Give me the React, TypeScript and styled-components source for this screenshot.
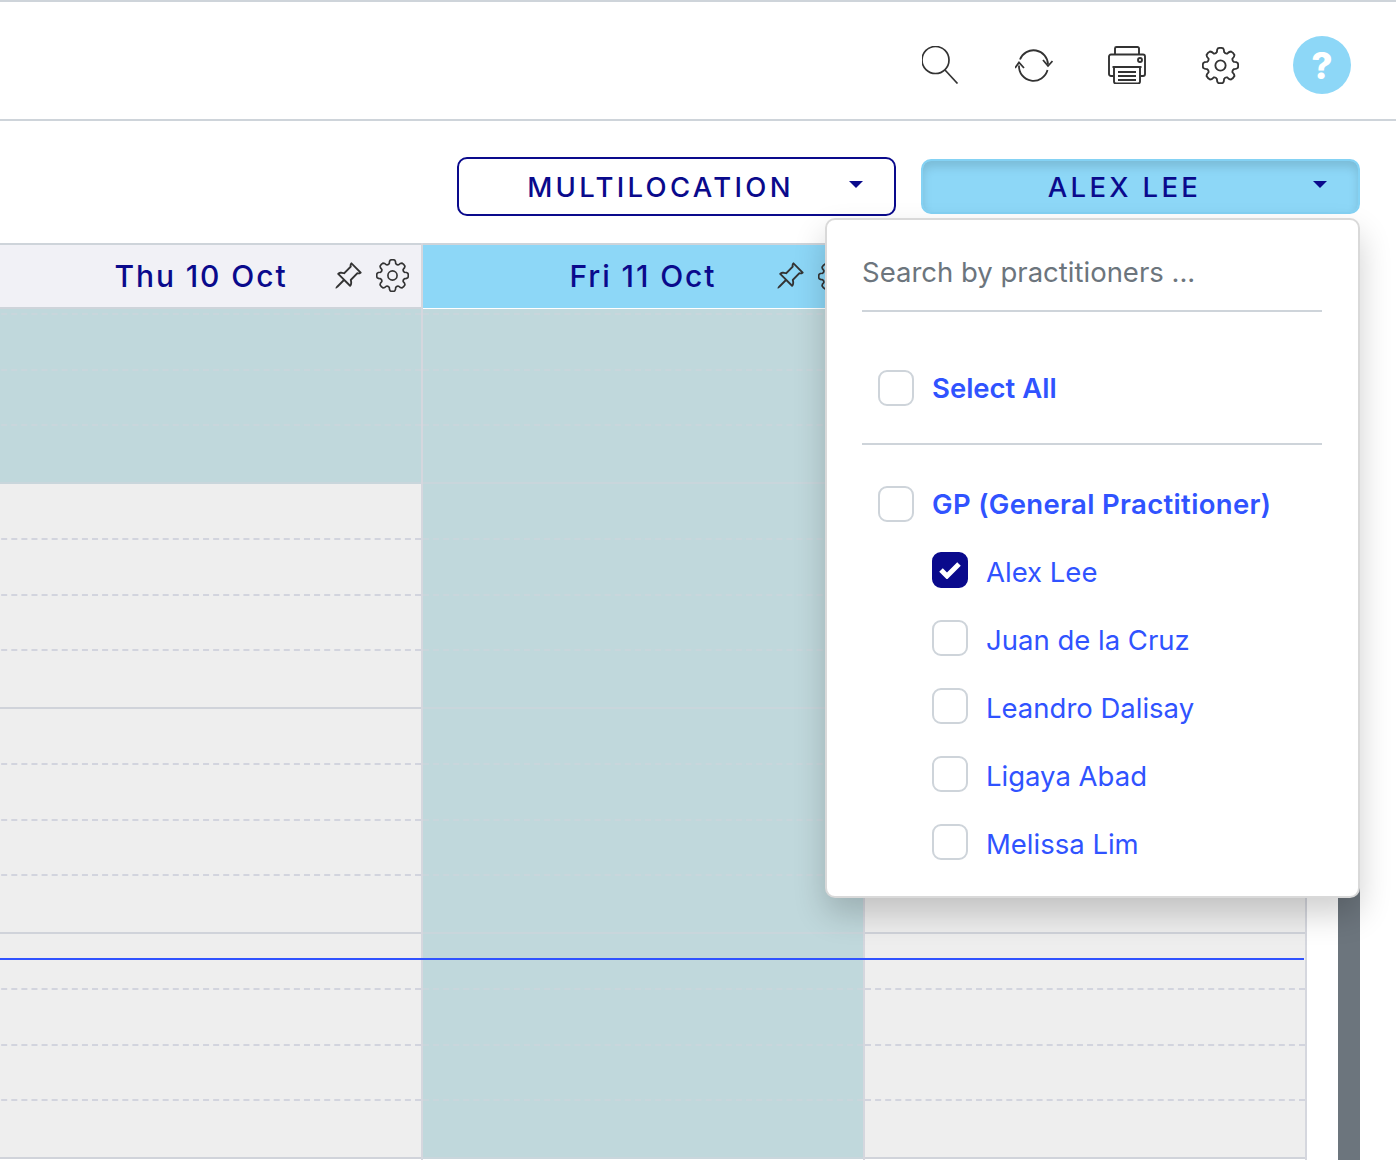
import styled, { createGlobalStyle } from "styled-components";
import { BsPinAngle } from "react-icons/bs";

const GlobalStyle = createGlobalStyle`
  html, body {
    margin: 0;
    height: 100%;
    background: #fff;
    overflow: hidden;
  }
  * {
    box-sizing: border-box;
  }
  body {
    font-family: "Inter", "Liberation Sans", sans-serif;
  }
`;

const Page = styled.div`
  position: relative;
  width: 1396px;
  height: 1160px;
  overflow: hidden;
  border-top: 2px solid #ced4da;
`;

const TopBar = styled.header`
  height: 119px;
  display: flex;
  align-items: center;
  justify-content: flex-end;
  padding: 9px 45px 0 0;
  gap: 55px;
  border-bottom: 2px solid #ced4da;
  color: #333;
`;

const ToolIcon = styled.span`
  display: flex;
  width: 38px;
  height: 38px;
  align-items: center;
  justify-content: center;
`;

const HelpButton = styled.span`
  width: 58px;
  height: 58px;
  margin-left: -1px;
  border-radius: 50%;
  background: #8dd7f7;
  color: #fff;
  font-size: 37px;
  font-weight: 800;
  display: flex;
  align-items: center;
  justify-content: center;
`;

const Filters = styled.div`
  height: 122px;
  display: flex;
  justify-content: flex-end;
  align-items: center;
  gap: 25px;
  padding: 9px 36px 0 0;
`;

const FilterButton = styled.div<{ $active?: boolean }>`
  position: relative;
  width: 439px;
  height: ${(p) => (p.$active ? "55px" : "59px")};
  border-radius: 10px;
  border: 2px solid ${(p) => (p.$active ? "#84d2f4" : "#0a0a8c")};
  background: ${(p) => (p.$active ? "#8dd7f7" : "#fff")};
  box-shadow: ${(p) => (p.$active ? "inset 0 6px 10px rgba(0, 0, 0, 0.125)" : "none")};
  color: #0a0a8c;
  font-size: 27.5px;
  letter-spacing: 3.3px;
  font-weight: 500;
  display: flex;
  align-items: center;
  justify-content: center;
  padding-right: 32px;
`;

const Caret = styled.span`
  position: absolute;
  right: 31px;
  top: 50%;
  margin-top: -6px;
  width: 0;
  height: 0;
  border-left: 7px solid transparent;
  border-right: 7px solid transparent;
  border-top: 7px solid #0a0a8c;
`;

const Calendar = styled.div`
  display: flex;
  width: 1360px;
  height: 917px;
`;

const Days = styled.div`
  flex: none;
  width: 1326px;
  margin-left: -19px;
  display: grid;
  grid-template-columns: repeat(3, 442px);
`;

const Day = styled.section`
  display: flex;
  flex-direction: column;
  min-width: 0;
  border-right: 2px solid #d5d7de;
`;

const DayHead = styled.div<{ $today?: boolean }>`
  height: 66px;
  flex: none;
  display: grid;
  grid-template-columns: 1fr auto 1fr;
  align-items: center;
  padding-bottom: 1px;
  border-top: 2px solid #ced4da;
  border-bottom: ${(p) => (p.$today ? "1px solid #fff" : "2px solid #ced4da")};
  background: ${(p) => (p.$today ? "#8dd7f7" : "#f1f1f6")};
  color: #333;
`;

const DayTitle = styled.h2`
  grid-column: 2;
  margin: 0;
  font-size: 30px;
  font-weight: 500;
  letter-spacing: 1.9px;
  color: #0a0a8c;
  white-space: nowrap;
`;

const DayTools = styled.div`
  grid-column: 3;
  display: flex;
  align-items: center;
  justify-content: flex-end;
  gap: 13px;
  padding-right: 12px;
`;

const Slots = styled.div`
  flex: 1;
  overflow: hidden;
  min-height: 0;
`;

const HourStack = styled.div`
  margin-top: -50px;
`;

const Hour = styled.div<{ $closed?: boolean }>`
  height: 225px;
  display: grid;
  grid-template-rows: repeat(4, 1fr);
  background: ${(p) => (p.$closed ? "#c0d8dc" : "#eeeeee")};
  border-bottom: 2px solid ${(p) => (p.$closed ? "#c9d6dc" : "#d0d3da")};
`;

const Slot = styled.div<{ $closed?: boolean }>`
  border-bottom: 2px dashed ${(p) => (p.$closed ? "#c9d6dc" : "#d2d4de")};
  &:last-child {
    border-bottom: none;
  }
`;

const Scrollbar = styled.div`
  flex: none;
  margin: 67px 0 0 31px;
  width: 22px;
  background: #6c757d;
`;

const NowLine = styled.div`
  position: absolute;
  top: 956px;
  left: 0;
  width: 1304px;
  height: 2px;
  background: #3053ff;
`;

const Dropdown = styled.div`
  position: absolute;
  top: 216px;
  left: 825px;
  width: 535px;
  height: 680px;
  padding: 0 36px 0 35px;
  background: #fff;
  border: 2px solid rgba(0, 0, 0, 0.15);
  border-radius: 10px;
  box-shadow: 0 16px 32px rgba(0, 0, 0, 0.19);
`;

const SearchField = styled.div`
  height: 92px;
  padding: 13px 0 0;
  display: flex;
  align-items: center;
  border-bottom: 2px solid #ced4da;
  color: #6c757d;
  font-size: 27.5px;
`;

const AllRow = styled.div`
  height: 133px;
  display: flex;
  align-items: center;
  padding: 20px 0 0 16px;
  gap: 18px;
  border-bottom: 2px solid #ced4da;
`;

const GroupRow = styled.div`
  height: 121px;
  padding: 0 0 3px 16px;
  display: flex;
  align-items: center;
  gap: 18px;
`;

const People = styled.ul`
  list-style: none;
  margin: -30px 0 0;
  padding: 0 0 0 70px;
  display: flex;
  flex-direction: column;
`;

const Person = styled.li`
  height: 68px;
  display: flex;
  align-items: center;
  gap: 18px;
`;

const Box = styled.span<{ $checked?: boolean }>`
  width: 36px;
  height: 36px;
  flex: none;
  border-radius: 9px;
  border: 2px solid ${(p) => (p.$checked ? "#0a0a8c" : "#ced4da")};
  background: ${(p) => (p.$checked ? "#0a0a8c" : "#fff")};
  display: flex;
  align-items: center;
  justify-content: center;
`;

const Label = styled.span<{ $bold?: boolean }>`
  color: #3053ff;
  font-size: 27.5px;
  font-weight: ${(p) => (p.$bold ? 600 : 400)};
  white-space: nowrap;
`;

const GroupLabel = styled(Label)`
  letter-spacing: 0.33px;
`;

const PersonLabel = styled(Label)`
  margin-top: 4px;
`;

const SearchIcon = () => (
  <svg width="38" height="38" viewBox="1 0 38 38" fill="none" stroke="#333" strokeWidth="1.7">
    <circle cx="14.500" cy="14" r="13.500" />
    <path d="M24 24 36.500 37.500" />
  </svg>
);

const RefreshIcon = () => (
  <svg width="38" height="38" viewBox="0 0 38 38" fill="none" stroke="#333" strokeWidth="1.8">
    <path d="M5 13.500A14.500 14.500 0 0 1 33 18.500" />
    <path d="M32.500 24A14.500 14.500 0 0 1 4 19.500" />
    <path d="M28 14 33 20 37.500 15" />
    <path d="M0 22 4 16.500 9 22" />
  </svg>
);

const PrinterIcon = () => (
  <svg width="38" height="38" viewBox="0 0 38 38" fill="none" stroke="#333" strokeWidth="1.9">
    <path d="M7 8V2.500A1.500 1.500 0 0 1 8.500 1h21A1.500 1.500 0 0 1 31 2.500V8" />
    <path d="M5.500 30H3a2 2 0 0 1-2-2V10.500a2 2 0 0 1 2-2h32a2 2 0 0 1 2 2V28a2 2 0 0 1-2 2h-2.500" />
    <path d="M4.500 21h29M6 21v14.500a2 2 0 0 0 2 2h22a2 2 0 0 0 2-2V21" />
    <path d="M10 26h18M10 30h18M10 34h18" />
    <circle cx="32" cy="14" r="2" />
  </svg>
);

// cog outline: 8 rounded teeth around a small hole
function gearPath(c: number, outer: number, root: number) {
  const at = (r: number, deg: number) => {
    const a = ((deg - 90) * Math.PI) / 180;
    return `${(c + r * Math.cos(a)).toFixed(2)} ${(c + r * Math.sin(a)).toFixed(2)}`;
  };
  let d = `M${at(root, -15)}`;
  for (let i = 0; i < 8; i++) {
    const t = i * 45;
    d += ` Q${at(outer - 1, t - 13)} ${at(outer, t - 8)}`;
    d += ` Q${at(outer + 0.6, t)} ${at(outer, t + 8)}`;
    d += ` Q${at(outer - 1, t + 13)} ${at(root, t + 15)}`;
    d += ` Q${at(root - 1.4, t + 22.5)} ${at(root, t + 30)}`;
  }
  return d + "Z";
}

const GearIcon = ({ size }: { size: number }) => (
  <svg width={size} height={size} viewBox="0 0 36 36" fill="none" stroke="#333" strokeWidth="1.8">
    <path d={gearPath(18, 17, 13.500)} />
    <circle cx="18" cy="18" r="5" />
  </svg>
);

const CheckIcon = () => (
  <svg width="22" height="18" viewBox="0 0 22 18" fill="none" stroke="#fff" strokeWidth="5">
    <path d="M2 9l6 6L20 3" />
  </svg>
);

const days = [
  { title: "Thu 10 Oct", today: false },
  { title: "Fri 11 Oct", today: true },
  { title: "", today: false },
];

const people = ["Alex Lee", "Juan de la Cruz", "Leandro Dalisay", "Ligaya Abad", "Melissa Lim"];

function isClosed(dayIndex: number, hourIndex: number) {
  if (dayIndex === 1) return true;
  return hourIndex === 0;
}

export default function App() {
  return (
    <>
      <GlobalStyle />
      <Page>
        <TopBar>
          <ToolIcon>
            <SearchIcon />
          </ToolIcon>
          <ToolIcon>
            <RefreshIcon />
          </ToolIcon>
          <ToolIcon>
            <PrinterIcon />
          </ToolIcon>
          <ToolIcon>
            <GearIcon size={37} />
          </ToolIcon>
          <HelpButton>?</HelpButton>
        </TopBar>
        <Filters>
          <FilterButton>
            MULTILOCATION
            <Caret />
          </FilterButton>
          <FilterButton $active>
            ALEX LEE
            <Caret />
          </FilterButton>
        </Filters>
        <Calendar>
          <Days>
            {days.map((day, d) => (
              <Day key={d}>
                <DayHead $today={day.today}>
                  {day.title && <DayTitle>{day.title}</DayTitle>}
                  {day.title && (
                    <DayTools>
                      <BsPinAngle size={30} />
                      <GearIcon size={33} />
                    </DayTools>
                  )}
                </DayHead>
                <Slots>
                  <HourStack>
                    {[0, 1, 2, 3].map((h) => (
                      <Hour key={h} $closed={isClosed(d, h)}>
                        {[0, 1, 2, 3].map((s) => (
                          <Slot key={s} $closed={isClosed(d, h)} />
                        ))}
                      </Hour>
                    ))}
                  </HourStack>
                </Slots>
              </Day>
            ))}
          </Days>
          <Scrollbar />
        </Calendar>
        <NowLine />
        <Dropdown>
          <SearchField>Search by practitioners ...</SearchField>
          <AllRow>
            <Box />
            <Label $bold>Select All</Label>
          </AllRow>
          <GroupRow>
            <Box />
            <GroupLabel $bold>GP (General Practitioner)</GroupLabel>
          </GroupRow>
          <People>
            {people.map((name, i) => (
              <Person key={name}>
                <Box $checked={i === 0}>{i === 0 && <CheckIcon />}</Box>
                <PersonLabel>{name}</PersonLabel>
              </Person>
            ))}
          </People>
        </Dropdown>
      </Page>
    </>
  );
}
